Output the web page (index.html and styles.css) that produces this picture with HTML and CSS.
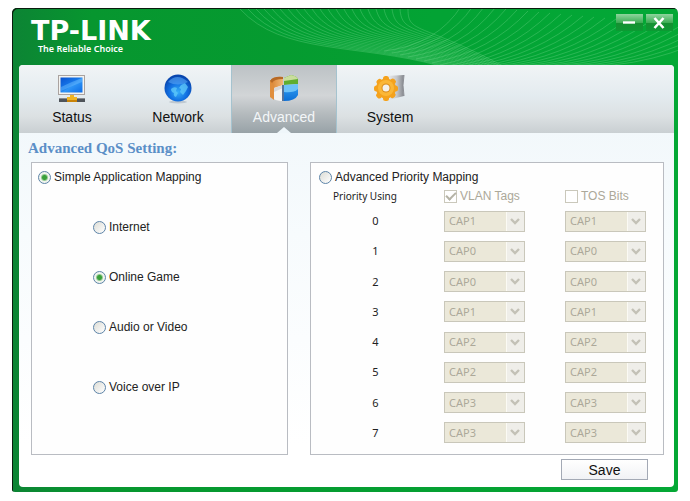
FILE: index.html
```html
<!DOCTYPE html>
<html lang="en">
<head>
<meta charset="utf-8">
<title>TP-LINK Powerline Utility</title>
<link rel="stylesheet" href="styles.css">
</head>
<body>
<svg class="defs" aria-hidden="true">
  <symbol id="chevron" viewBox="0 0 18 19">
    <rect width="18" height="19" fill="#efeee9"/>
    <rect x="0" width="1" height="19" fill="#fbfaf4"/>
    <path d="M5 7l4 4 4-4" fill="none" stroke="#c3c1b6" stroke-width="2.4"/>
  </symbol>
</svg>
<div class="window">
  <header class="titlebar">
    <svg class="waves" id="waves" viewBox="0 0 666 57" aria-hidden="true"></svg>
    <div class="brand">
      <div class="brand-name">TP-LINK</div>
      <div class="brand-line">The Reliable Choice</div>
    </div>
    <div class="controls">
      <button class="control" type="button" aria-label="Minimize"><svg viewBox="0 0 26 17"><path d="M7 8.500h12" stroke="#fff" stroke-width="2.4"/></svg></button>
      <button class="control" type="button" aria-label="Close"><svg viewBox="0 0 26 17"><path d="M8.500 4l9 10M17.500 4l-9 10" stroke="#fff" stroke-width="2.6"/></svg></button>
    </div>
  </header>
  <main class="client">
    <nav class="tabs">
      <a class="tab" href="#status">
        <svg viewBox="0 0 32 30">
          <defs><linearGradient id="scr" x1="0" y1="0" x2="1" y2="1"><stop offset="0" stop-color="#0a52cf"/><stop offset=".45" stop-color="#1678ea"/><stop offset=".55" stop-color="#2f95f6"/><stop offset="1" stop-color="#0b6be6"/></linearGradient></defs>
          <rect x="2.500" y="1.500" width="26" height="19" fill="#f4f3f0" stroke="#aaa3a0"/>
          <rect x="4.500" y="3.500" width="22" height="15" fill="url(#scr)"/>
          <path d="M5 13Q15 8 26 4V8Q16 12 5 17z" fill="#63b4fb" opacity=".55"/>
          <rect x="3" y="24" width="26" height="4" fill="#4f545a"/>
          <rect x="3" y="24" width="26" height="1" fill="#878b90"/>
          <path d="M14 21h4v2h3v5H11v-5h3z" fill="#f0b422"/>
          <path d="M11 26h10v2H11z" fill="#c98408"/>
        </svg>
        <span>Status</span>
      </a>
      <a class="tab" href="#network">
        <svg viewBox="0 0 32 30">
          <defs><radialGradient id="glb" cx=".5" cy=".65" r=".6"><stop offset="0" stop-color="#36aef9"/><stop offset=".55" stop-color="#1170e2"/><stop offset="1" stop-color="#0845ae"/></radialGradient></defs>
          <ellipse cx="16" cy="28" rx="9" ry="1.500" fill="#a9b4bf" opacity=".6"/>
          <circle cx="16" cy="14" r="13.500" fill="url(#glb)"/>
          <path d="M6 8Q15-2 26 8Q16 13 6 8z" fill="#59a5f4" opacity=".6"/>
          <path d="M9 15q3-3 6-1l-1 3 2 2-2 4q-3-1-2-4-3-1-3-4zM19 11l4-2 3 4-2 4-3 4-3-3 1-3-2-1z" fill="#62cbf9" opacity=".75"/>
        </svg>
        <span>Network</span>
      </a>
      <a class="tab active" href="#advanced" aria-current="page">
        <svg viewBox="0 0 32 30">
          <defs>
            <linearGradient id="blue" x1="0" y1="0" x2="0" y2="1"><stop offset="0" stop-color="#2f9bf0"/><stop offset="1" stop-color="#0c6fd6"/></linearGradient>
            <linearGradient id="orange"><stop offset="0" stop-color="#d8802c"/><stop offset="1" stop-color="#f0b877"/></linearGradient>
          </defs>
          <path d="M2 7Q5 2 15 3V14L4 15 2 22z" fill="url(#orange)"/>
          <path d="M2 7Q5 2 15 3V5Q6 5 4 9z" fill="#b76a26"/>
          <path d="M2 7v16l4 3V12z" fill="#e08e3c"/>
          <path d="M6 14l9-3v16Q9 27 6 25z" fill="#f3f2f0"/>
          <path d="M6 14l9-3v3l-9 4z" fill="#d9d9da"/>
          <path d="M14 11h2v16h-2z" fill="#54749c"/>
          <path d="M16 4l7-3q6 1 7 4v5l-14 1z" fill="#5fae2f"/>
          <path d="M16 4l7-3q6 1 7 4l-14 2z" fill="#c9dd9c"/>
          <path d="M16 12h14v9q-3 6-14 6z" fill="url(#blue)"/>
          <path d="M16 11l14-1v5q-4 4-14 3z" fill="#6cc2f8"/>
        </svg>
        <span>Advanced</span>
      </a>
      <a class="tab" href="#system">
        <svg viewBox="0 0 32 30">
          <defs>
            <linearGradient id="cyl"><stop offset="0" stop-color="#f5f5f6"/><stop offset=".6" stop-color="#c4c6c9"/><stop offset="1" stop-color="#83868c"/></linearGradient>
            <g id="teeth"><rect x="9" y="2" width="6" height="25" rx="2.500"/><rect x="0" y="11.500" width="24" height="6" rx="2.500"/></g>
          </defs>
          <path d="M12 2L30 1Q28 11 30 22L14 26z" fill="url(#cyl)"/>
          <path d="M30 1Q28 11 30 22" fill="none" stroke="#8d8f95"/>
          <g fill="#f5a21c"><circle cx="12" cy="14.500" r="10"/><use href="#teeth"/><use href="#teeth" transform="rotate(45 12 14.500)"/></g>
          <circle cx="12" cy="14" r="8" fill="#fbb737"/>
          <circle cx="12" cy="14" r="4.500" fill="#d98b1b"/>
          <circle cx="12" cy="14" r="3.500" fill="#f4f1ea"/>
        </svg>
        <span>System</span>
      </a>
    </nav>
    <form class="page">
      <h1>Advanced QoS Setting:</h1>
      <div class="panels">
        <section class="panel simple">
          <label class="choice"><input type="radio" name="mode" checked>Simple Application Mapping</label>
          <div class="apps">
            <label class="choice"><input type="radio" name="app">Internet</label>
            <label class="choice"><input type="radio" name="app" checked>Online Game</label>
            <label class="choice"><input type="radio" name="app">Audio or Video</label>
            <label class="choice last"><input type="radio" name="app">Voice over IP</label>
          </div>
        </section>
        <section class="panel mapping">
          <label class="choice"><input type="radio" name="mode">Advanced Priority Mapping</label>
          <table>
            <thead>
              <tr>
                <th class="using" scope="col">Priority Using</th>
                <th class="vlan" scope="col"><label class="check"><input type="checkbox" checked disabled>VLAN Tags</label></th>
                <th scope="col"><label class="check"><input type="checkbox" disabled>TOS Bits</label></th>
              </tr>
            </thead>
            <tbody>
              <tr><th scope="row">0</th><td><div class="drop"><select disabled aria-label="VLAN 0"><option>CAP1</option></select><svg><use href="#chevron"/></svg></div></td><td><div class="drop"><select disabled aria-label="TOS 0"><option>CAP1</option></select><svg><use href="#chevron"/></svg></div></td></tr>
              <tr><th scope="row">1</th><td><div class="drop"><select disabled aria-label="VLAN 1"><option>CAP0</option></select><svg><use href="#chevron"/></svg></div></td><td><div class="drop"><select disabled aria-label="TOS 1"><option>CAP0</option></select><svg><use href="#chevron"/></svg></div></td></tr>
              <tr><th scope="row">2</th><td><div class="drop"><select disabled aria-label="VLAN 2"><option>CAP0</option></select><svg><use href="#chevron"/></svg></div></td><td><div class="drop"><select disabled aria-label="TOS 2"><option>CAP0</option></select><svg><use href="#chevron"/></svg></div></td></tr>
              <tr><th scope="row">3</th><td><div class="drop"><select disabled aria-label="VLAN 3"><option>CAP1</option></select><svg><use href="#chevron"/></svg></div></td><td><div class="drop"><select disabled aria-label="TOS 3"><option>CAP1</option></select><svg><use href="#chevron"/></svg></div></td></tr>
              <tr><th scope="row">4</th><td><div class="drop"><select disabled aria-label="VLAN 4"><option>CAP2</option></select><svg><use href="#chevron"/></svg></div></td><td><div class="drop"><select disabled aria-label="TOS 4"><option>CAP2</option></select><svg><use href="#chevron"/></svg></div></td></tr>
              <tr><th scope="row">5</th><td><div class="drop"><select disabled aria-label="VLAN 5"><option>CAP2</option></select><svg><use href="#chevron"/></svg></div></td><td><div class="drop"><select disabled aria-label="TOS 5"><option>CAP2</option></select><svg><use href="#chevron"/></svg></div></td></tr>
              <tr><th scope="row">6</th><td><div class="drop"><select disabled aria-label="VLAN 6"><option>CAP3</option></select><svg><use href="#chevron"/></svg></div></td><td><div class="drop"><select disabled aria-label="TOS 6"><option>CAP3</option></select><svg><use href="#chevron"/></svg></div></td></tr>
              <tr><th scope="row">7</th><td><div class="drop"><select disabled aria-label="VLAN 7"><option>CAP3</option></select><svg><use href="#chevron"/></svg></div></td><td><div class="drop"><select disabled aria-label="TOS 7"><option>CAP3</option></select><svg><use href="#chevron"/></svg></div></td></tr>
            </tbody>
          </table>
        </section>
      </div>
      <div class="actions"><button class="save" type="button">Save</button></div>
    </form>
  </main>
</div>
<script src="waves.js"></script>
</body>
</html>
```
FILE: waves.js
```js
// Draws the two bundles of thin curves behind the title bar.
const waves = document.getElementById('waves');
let falling = '';
let rising = '';
for (let i = 0; i < 22; i++) {
  falling += `M${228 + i * 8} 0C${270 + i * 6} ${46 - i} ${345 + i * 3} ${34 - i} ${428 + i * 3} 57`;
}
for (let i = 0; i < 25; i++) {
  rising += `M${372 + i * 8} ${42 + Math.min(i * 2, 15)}Q${425 + i * 9} ${36 + i} ${450 + i * 11} ${-4 + i}`;
}
waves.innerHTML =
  '<path d="M228 0C270 46 345 34 428 57H600L640 0z" fill="#00ad3a" opacity=".25"/>' +
  `<path d="${falling}" fill="none" stroke="#7fdc96" stroke-width=".7" opacity=".45"/>` +
  `<path d="${rising}" fill="none" stroke="#7fdc96" stroke-width=".7" opacity=".45"/>`;
```
FILE: styles.css
```css
* {
  box-sizing: border-box;
}

body {
  margin: 0;
  padding: 8px 12px;
  background: #fff;
  font: 12px/16px "Liberation Sans", Arial, sans-serif;
  color: #222;
}

.defs {
  display: none;
}

.window {
  padding: 0 4px 5px 7px;
  border-radius: 5px 5px 3px 3px;
  background: linear-gradient(90deg, #0c8434, #07962f 12%, #059b30 40%, #04a835);
  box-shadow: inset 1px 1px #0a1c0e;
}

.titlebar {
  position: relative;
  display: flex;
  justify-content: space-between;
  align-items: flex-start;
  height: 57px;
  margin: 0 -4px 0 -7px;
  overflow: hidden;
}

.waves {
  position: absolute;
  top: 1px;
  right: 0;
  width: 666px;
  height: 57px;
}

.brand {
  padding: 11px 0 0 19px;
  color: #fff;
}

.brand-name {
  font: bold 27px/24px "DejaVu Sans", sans-serif;
}

.brand-line {
  padding-left: 7px;
  font: 600 9px/12px "Noto Sans", sans-serif;
}

.controls {
  position: relative;
  display: flex;
  gap: 3px;
  padding: 6px 5px 0 0;
}

.control {
  width: 27px;
  height: 17px;
  padding: 0;
  border: 0;
  background: linear-gradient(#8fd59d, #3fae57 50%, #159032 55%, #0c9a33);
}

.control svg {
  display: block;
  width: 26px;
  height: 17px;
}

.client {
  border-radius: 4px;
  overflow: hidden;
  background: linear-gradient(#eff6fa, #f7fbfd 40%, #fff 90%);
}

.tabs {
  display: flex;
  background: linear-gradient(#f1f4f6, #e3ebef 45%, #dce1e3 75%, #c9cfd2);
}

.tab {
  position: relative;
  display: flex;
  flex-direction: column;
  align-items: center;
  gap: 4px;
  width: 106px;
  height: 68px;
  padding-top: 9px;
  color: #111;
  font-size: 14px;
  line-height: 18px;
  text-decoration: none;
}

.tab svg {
  width: 32px;
  height: 30px;
}

.active {
  border: solid #a5c3cf;
  border-width: 0 1px;
  background: linear-gradient(#bcc2c5, #d2d5d7 45%, #b6bcbf 70%, #98a2a7);
  color: #f3f6f8;
}

.active::after {
  content: "";
  position: absolute;
  bottom: 0;
  left: 45px;
  border: solid transparent;
  border-width: 0 7px 6px;
  border-bottom-color: #eff6fa;
}

.page {
  padding: 5px 10px 7px 12px;
}

h1 {
  margin: 0 0 4px -3px;
  font: bold 15px/20px "Liberation Serif", serif;
  color: #5b8fc7;
}

.panels {
  display: grid;
  grid-template-columns: 257fr 354fr;
  gap: 22px;
}

.panel {
  border: 1px solid #b9bcc2;
  padding: 5px 6px 6px;
  background: #fefefe;
}

.choice {
  display: flex;
  align-items: center;
  gap: 3px;
  height: 18px;
}

.choice input {
  appearance: none;
  width: 13px;
  height: 13px;
  margin: 0;
  border: 1px solid #5d84a8;
  border-radius: 50%;
  background: linear-gradient(135deg, #dcdcd5, #fff);
}

.choice input:checked {
  background: radial-gradient(circle, #3aa03a 2px, #f0f4ee 4px);
}

.apps {
  display: flex;
  flex-direction: column;
  gap: 32px;
  padding: 32px 0 0 55px;
}

.last {
  margin-top: 10px;
}

.mapping {
  padding-left: 8px;
}

table {
  width: 100%;
  height: 262px;
  border-collapse: collapse;
  table-layout: fixed;
}

th,
td {
  padding: 0;
  font: 11px/14px "Noto Sans", Tahoma, sans-serif;
  text-align: left;
}

thead th {
  height: 20px;
}

.using {
  width: 125px;
  padding-left: 14px;
  font-size: 10px;
}

.vlan {
  width: 121px;
}

tbody th {
  padding-right: 12px;
  text-align: center;
}

.check {
  display: flex;
  align-items: center;
  gap: 3px;
  font: 12px/16px "Liberation Sans", Arial, sans-serif;
  color: #aca899;
}

.check input {
  appearance: none;
  display: grid;
  place-items: center;
  width: 13px;
  height: 13px;
  margin: 0;
  border: 1px solid #cac8bb;
  background: #fff;
}

.check input:checked::before {
  content: "";
  width: 8px;
  height: 4px;
  margin-bottom: 3px;
  border: solid #b5b3a6;
  border-width: 0 0 2px 2px;
  rotate: -45deg;
}

.drop {
  position: relative;
  width: 81px;
}

.drop select {
  appearance: none;
  display: block;
  width: 100%;
  height: 21px;
  padding: 0 0 0 4px;
  border: 1px solid #c9c7ba;
  border-radius: 0;
  background: #ebe8d9;
  color: #aca899;
  opacity: 1;
  font: 11px/18px "Noto Sans", Tahoma, sans-serif;
}

.drop svg {
  position: absolute;
  top: 1px;
  right: 1px;
  width: 18px;
  height: 19px;
  pointer-events: none;
}

.actions {
  display: flex;
  justify-content: flex-end;
  padding: 4px 16px 0 0;
}

.save {
  width: 87px;
  height: 21px;
  padding: 0;
  border: 1px solid #a3a9b5;
  background: linear-gradient(#fff, #f1f2f5);
  color: #111;
  font: 14px/18px "Liberation Sans", Arial, sans-serif;
}
```
